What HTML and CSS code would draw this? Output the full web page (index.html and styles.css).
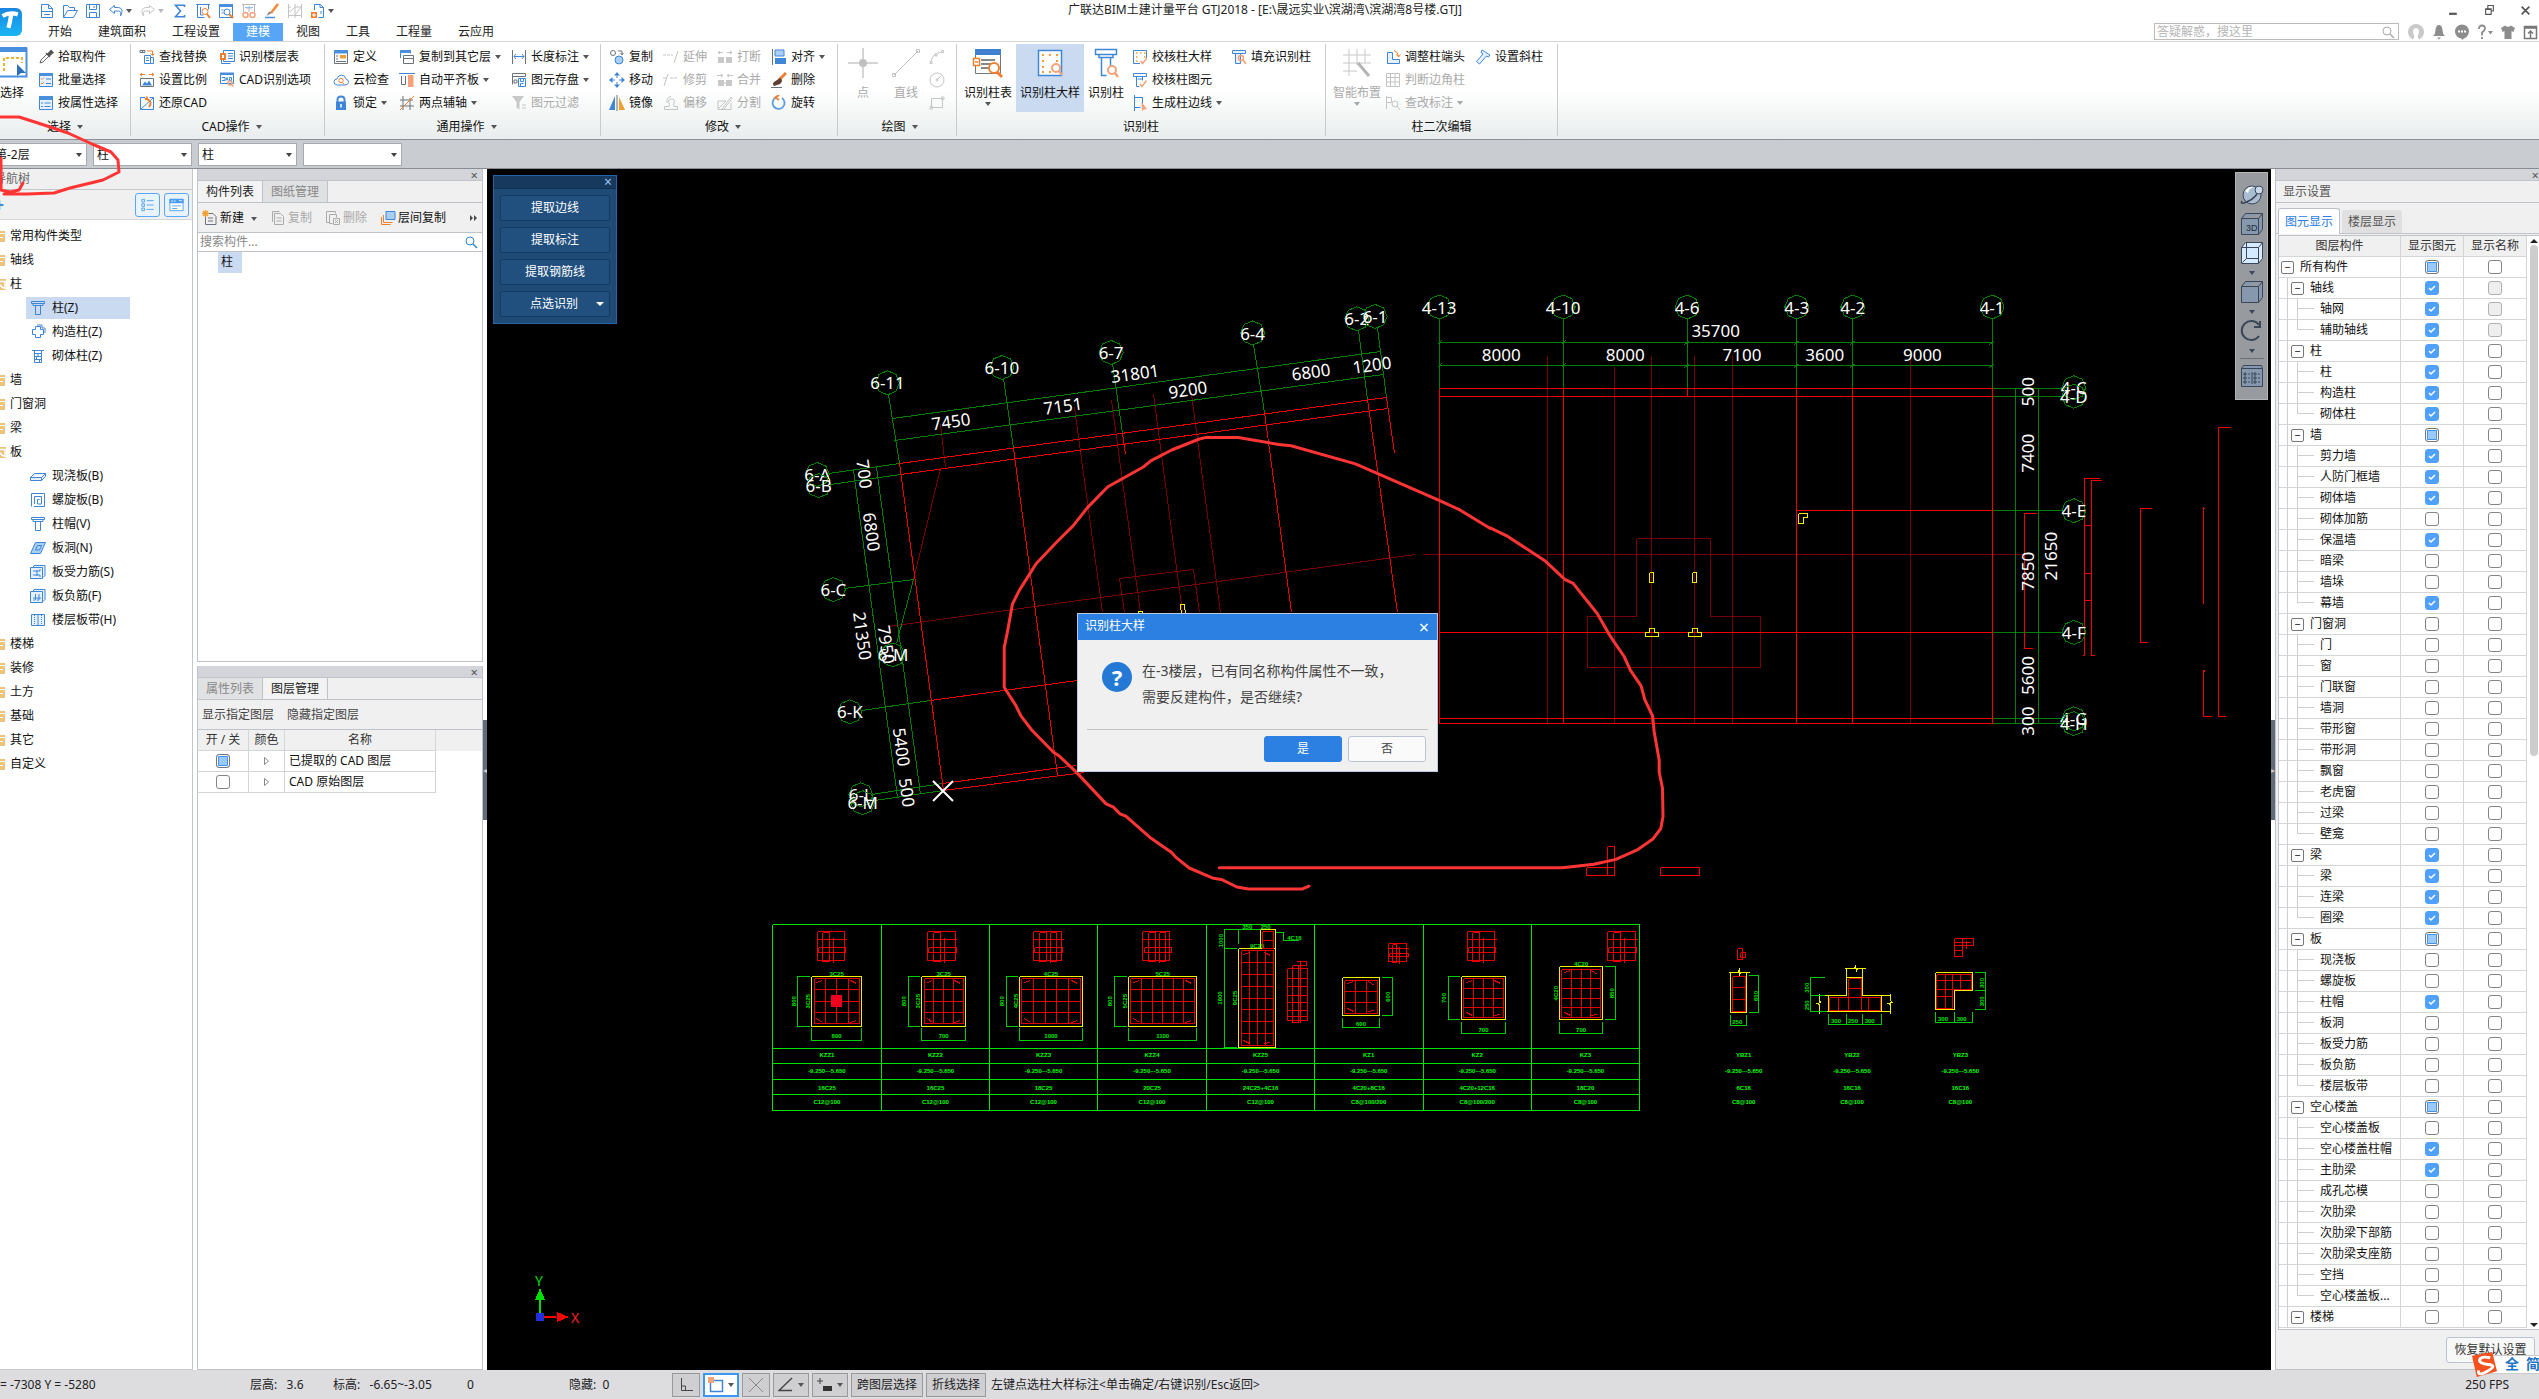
FILE: index.html
```
<!DOCTYPE html>
<html lang="zh-CN">
<head>
<meta charset="utf-8">
<title>广联达BIM土建计量平台 GTJ2018</title>
<link rel="stylesheet" href="styles.css">
</head>
<body>
<svg class="sprite" aria-hidden="true">
  <symbol id="i-new" viewBox="0 0 16 16"><path class="b" d="M2.5 1.5h7l4 4v9h-11zM9.500 1.500v4h4M2.500 8.500h11M5 11.500h6" /></symbol>
  <symbol id="i-open" viewBox="0 0 16 16"><path class="b" d="M1.500 14.500v-12h4l2 2h5v3M1.500 14.500l4-7h10l-4 7z"/></symbol>
  <symbol id="i-save" viewBox="0 0 16 16"><path class="b" d="M1.500 1.500h13v13h-13zM4.500 1.500v5h7v-5M4.500 14.500v-5h7v5M9 3v2"/></symbol>
  <symbol id="i-undo" viewBox="0 0 16 16"><path class="b" d="M6.500 2.500l-5 4 5 4v-2.500h4q3 0 2 5q4-7.500-2-8.500h-4z"/></symbol>
  <symbol id="i-redo" viewBox="0 0 16 16"><path class="g" d="M9.500 2.500l5 4-5 4v-2.500h-4q-3 0-2 5q-4-7.500 2-8.500h4z"/></symbol>
  <symbol id="i-sum" viewBox="0 0 16 16"><path d="M12.500 4v-1.800h-9l5 5.800-5 5.800h9V12" fill="none" stroke="#3f86d8" stroke-width="1.600"/></symbol>
  <symbol id="i-find" viewBox="0 0 16 16"><path class="b" d="M1 1.500h14M2.500 1.500v13h7M5.500 4v8h3M13.500 1.500v5"/><circle class="o" cx="10" cy="8.500" r="3"/><path class="o2" d="M12 11l3 4"/></symbol>
  <symbol id="i-winfind" viewBox="0 0 16 16"><path class="b" d="M1.500 1.500h13v13h-13zM3.500 7h2M3.500 10h2"/><path d="M1 1h14v3h-14z" fill="#4a8ede"/><circle cx="9" cy="9" r="3" fill="#fff" stroke="#3f86d8"/><path class="o2" d="M11 11l4 4"/></symbol>
  <symbol id="i-glasses" viewBox="0 0 16 16"><path d="M2.500 9v-7.500h11v7.500M1 1.500h14M5 5h6M8 3v6" fill="none" stroke="#b8b8b8"/><path d="M4 4.500h8" stroke="#8cc0f0"/><circle class="ol" cx="4.500" cy="12" r="2.500"/><circle class="ol" cx="11.500" cy="12" r="2.500"/></symbol>
  <symbol id="i-brush" viewBox="0 0 16 16"><path d="M14 1l-7 9" stroke="#f08a3c" stroke-width="2.600"/><path d="M7.500 10l-5 3q2-4 3-4.500" fill="#7a8088"/><path d="M1 14.500h10" stroke="#4a90e2" stroke-width="1.500"/></symbol>
  <symbol id="i-mesh" viewBox="0 0 16 16"><path class="g" d="M1.500 1v14M8 1v14M14.500 1v14M1 12.500h14M1 8h3l4-4h7M1 4h3M8 12l6-8"/></symbol>
  <symbol id="i-addpage" viewBox="0 0 16 16"><path class="b" d="M4.500 7v-5.500h6l3 3v10h-5M10 1.500v3h3.500M11 8v3"/><path d="M1 9h6v6h-6z" fill="#f08030"/><path d="M4 10v4M2 12h4" stroke="#fff"/></symbol>
  <symbol id="i-pick" viewBox="0 0 16 16"><path d="M2 14l1-3 6-6 2 2-6 6z" fill="#fff" stroke="#666"/><path d="M8 4l4 4M9.500 5.500l3.500-4 2 2-4 3.500z" stroke="#555" fill="#555" stroke-width="1.500"/></symbol>
  <symbol id="i-batch" viewBox="0 0 16 16"><path class="bf" d="M1.500 1.500h13v13h-13z"/><path d="M1 1h14v3h-14z" fill="#4a8ede"/><path class="o" d="M3 6.500l1 1 2-2M3 11l1 1 2-2"/><path class="b" d="M8 7h5M8 11.500h5"/></symbol>
  <symbol id="i-prop" viewBox="0 0 16 16"><path class="bf" d="M1.500 1.500h13v13h-13z"/><path d="M1 1h14v4h-14z" fill="#4a8ede"/><path class="b" d="M3 8h2M6.500 8h6M3 11.500h2M6.500 11.500h6"/></symbol>
  <symbol id="i-replace" viewBox="0 0 16 16"><path class="k" d="M1 1.500h5v2h-5zM3.500 1.500v2"/><path class="b" d="M5.500 6.500h6v8h-6zM7 9h3M7 11.500h3"/><path class="b" d="M11.500 8.500h3v6h-3"/><path class="o" d="M8 2h5.500v4M11.500 4.500l2 2 2-2"/></symbol>
  <symbol id="i-scale" viewBox="0 0 16 16"><path class="k" d="M1.500 6.500h13v8h-13z"/><path d="M3 13.500l3-4 2 2 2-3 3 5z" fill="#3f86d8"/><path class="o" d="M1 2.500h5M3 1L1 2.500 3 4M15 2.500h-5M13 1l2 1.500L13 4"/></symbol>
  <symbol id="i-restore" viewBox="0 0 16 16"><path class="b" d="M6 2.500h-4.500v12h13v-12h-4M1.500 14.500l13-12"/><path class="o2" d="M10 12q4-5-2-8M6 4.500l2-1-.5-2"/></symbol>
  <symbol id="i-floors" viewBox="0 0 16 16"><path class="b" d="M4.500 1.500h11v11h-11zM9 4.500h5M9 7h5M9 9.500h5"/><path class="b" d="M2.500 4v10.500h9"/><path d="M1 4h6v7H1z" fill="#f08030"/><path d="M3 6h2v3H3z" fill="#fff"/></symbol>
  <symbol id="i-cad" viewBox="0 0 16 16"><path class="b" d="M1.500 2.500h13v9h-13zM3 5.500h3v3H3M7 8.500l1-3 1 3M10.500 5.500h2v3h-2z"/><path d="M1 1.500h14" stroke="#4a8ede" stroke-width="2"/><circle class="ol" cx="11" cy="11" r="2"/><path class="ol" d="M12.500 12.500l2 2"/></symbol>
  <symbol id="i-define" viewBox="0 0 16 16"><path class="k" d="M1.500 1.500h13v13h-13z"/><path d="M1 1h14v3.500H1z" fill="#4a8ede"/><path d="M7 6h6v3.500H7z" fill="#f0a030"/><path class="k" d="M3 7h2M3 10h2M3 12.500h10"/></symbol>
  <symbol id="i-cloud" viewBox="0 0 16 16"><path class="b" d="M4 13q-3.500-.5-3-3.500.5-2.500 3-2.500 1-4 4.500-4t4.500 4q3 1 2.500 3.500-.5 2.500-3.500 2.500z"/><circle class="o" cx="8" cy="8.500" r="2.200"/><path class="o" d="M9.500 10.500l2 2"/></symbol>
  <symbol id="i-lock" viewBox="0 0 16 16"><path d="M4.500 7v-2.500q0-3 3.500-3t3.500 3v2.500" fill="none" stroke="#3f86d8" stroke-width="1.800"/><path d="M3 6.500h10v8.500h-10z" fill="#3f86d8"/><path d="M8 9v3.500" stroke="#fff" stroke-width="1.500"/></symbol>
  <symbol id="i-copyto" viewBox="0 0 16 16"><path class="b" d="M1.500 9v-7.500h10v3"/><path d="M1 1h11v3H1z" fill="#4a8ede"/><path class="k" d="M4.500 6.500h10v8h-10zM4.500 9.500h10"/></symbol>
  <symbol id="i-flush" viewBox="0 0 16 16"><path class="b" d="M0 1.500h16"/><path class="k" d="M2.500 4v8.500h4v-8.500"/><path d="M9 3h5.500v12H9z" fill="#f5a27a"/></symbol>
  <symbol id="i-axis" viewBox="0 0 16 16"><path class="k" d="M4 1v14M11 3v12M1 5h13M1 11h14"/><path class="o" d="M1 15L15 1"/></symbol>
  <symbol id="i-length" viewBox="0 0 16 16"><path class="k" d="M1.500 1v14M14.500 1v14"/><path class="b" d="M3 7.500h10M5 5L3 7.500 5 10M11 5l2 2.500-2 2.500"/></symbol>
  <symbol id="i-disk" viewBox="0 0 16 16"><path class="k" d="M1.500 12.500v-11h13v3M1.500 4.500h13M3 8h3v3H3z"/><path class="b" d="M7.500 6.500h7v8h-7zM9.500 6.500v3h3v-3M9.500 14v-2.500h3"/></symbol>
  <symbol id="i-filter" viewBox="0 0 16 16"><path d="M1 1h12l-4.500 6v7.500l-3-2V7z" fill="#c8c8c8"/><path class="g" d="M11 10h4M11 13h4"/></symbol>
  <symbol id="i-copy" viewBox="0 0 16 16"><circle class="k" cx="4" cy="4" r="2.500"/><circle cx="10" cy="11" r="4" fill="#a9cff5" stroke="#3f86d8"/><path class="k" d="M9 2h4v3M11.500 4l1.500 2 1.500-2"/></symbol>
  <symbol id="i-move" viewBox="0 0 16 16"><path d="M8 0l3 3.500H5zM8 16l3-3.500H5zM0 8l3.500-3v6zM16 8l-3.500-3v6z" fill="#3f86d8"/><path class="b" d="M8 3v3M8 10v3M3 8h3M10 8h3"/></symbol>
  <symbol id="i-mirror" viewBox="0 0 16 16"><path d="M6 1v14H0z" fill="#3f86d8"/><path d="M10 2v13h6z" fill="#f0a030"/><path class="k" d="M8 0v16"/></symbol>
  <symbol id="i-extend" viewBox="0 0 16 16"><path class="g" d="M0 6h3M4 6h3M8 6h2M15 2l-4 12"/></symbol>
  <symbol id="i-trim" viewBox="0 0 16 16"><path class="g" d="M5 2L1 14M0 6h4M7 6h3M11 6h3"/></symbol>
  <symbol id="i-offset" viewBox="0 0 16 16"><path class="g" d="M1.500 14.500h13v-3H11q-1-2 0-3.500 1.500-4-2.500-4T6 8q1 1.500 0 3.500H1.500zM4 8q-1-6 4-6.500"/></symbol>
  <symbol id="i-break" viewBox="0 0 16 16"><path d="M1 8h6v6H1zM9 8h6v6H9z" fill="#c8c8c8"/><path class="g" d="M1 3.500h5M3 2L1 3.500 3 5M15 3.500h-5M13 2l2 1.500L13 5"/></symbol>
  <symbol id="i-merge" viewBox="0 0 16 16"><path d="M1 8h6v6H1zM9 8h6v6H9z" fill="#c8c8c8"/><path class="g" d="M0 3.500h6M4 2l2 1.500L4 5M16 3.500h-6M12 2l-2 1.500L12 5M7 11h2"/></symbol>
  <symbol id="i-split" viewBox="0 0 16 16"><path class="g" d="M1 6h8M1 6v8.500h13V8M5 14l9-12 1 1.500L7 14M1 14L9 6"/></symbol>
  <symbol id="i-align" viewBox="0 0 16 16"><path d="M4 1h9v6H4z" fill="#a9cff5" stroke="#3f86d8"/><path d="M4 9h11v6H4z" fill="#3f86d8"/><path class="k" d="M1.500 0v16"/></symbol>
  <symbol id="i-erase" viewBox="0 0 16 16"><path d="M15 1L8 8" stroke="#f08030" stroke-width="3"/><path d="M9 6q4 2 0 6l-6 2q-2-2 0-4z" fill="#5d4034"/><path class="k" d="M0 15.500h11"/></symbol>
  <symbol id="i-rotate" viewBox="0 0 16 16"><path d="M5 2.500A6 6 0 1 0 11 3" fill="none" stroke="#5a9be6" stroke-width="1.800"/><path class="o2" d="M8 0l-3.500 2.500L8 5"/></symbol>
  <symbol id="i-circle" viewBox="0 0 16 16"><circle class="g" cx="8" cy="8" r="7"/><circle class="g" cx="8" cy="8" r="1"/><path class="g" d="M8 8l4-4"/></symbol>
  <symbol id="i-arc" viewBox="0 0 16 16"><path class="g" d="M2 13Q3 4 13 3M1 12.500h2v2H1zM12.500 1.500h2v2h-2zM6 5h2v2H6z"/></symbol>
  <symbol id="i-rect" viewBox="0 0 16 16"><path class="g" d="M2.500 3.500h11v9h-11zM1 11.500h2.500v2.500H1zM12.500 2h2.500v2.500h-2.500z"/></symbol>
  <symbol id="i-chkdet" viewBox="0 0 16 16"><path class="b" d="M1.500 1.500h13v13h-13z"/><path class="oy" d="M4 4h1.500M8 4h1.500M12 4h1.500M4 8h1.500M4 12h1.500M12 8h1.500"/><path d="M8 9h8v7H8z" fill="#fff"/><path class="ol" d="M8.500 12l2 2.500 4-5"/></symbol>
  <symbol id="i-chkcol" viewBox="0 0 16 16"><path class="b" d="M1.500 1.500h13v3h-13zM4.500 4.500v10h3M10.500 4.500v4M5.500 7h5"/><path class="ol" d="M8 12l2 2.500 4.500-6"/></symbol>
  <symbol id="i-edge" viewBox="0 0 16 16"><path class="b" d="M2.500 0v16M2.500 2.500h8v8M2.500 12.500h6"/><path d="M9.500 7l5.500 7-3 .5-2 1.500z" fill="#f5a27a"/></symbol>
  <symbol id="i-col" viewBox="0 0 16 16"><path class="b" d="M1.500 1.500h13v2h-13zM3 3.500v2h10v-2M5.500 5.500v9h5v-9"/></symbol>
  <symbol id="i-colfill" viewBox="0 0 16 16"><path class="bf" d="M1.500 1.500h13v3h-13zM4.500 4.500v10h5v-10"/><circle class="ol" cx="10" cy="9" r="2.500"/><path class="ol" d="M12 11l3 4"/></symbol>
  <symbol id="i-head" viewBox="0 0 16 16"><path class="bf" d="M2.500 3.500v11h12v-4h-7v-7z"/><path class="o" d="M9 1.500q4 1 4.500 6M11.500 5.500l2 2.500 2-2.500"/></symbol>
  <symbol id="i-corner" viewBox="0 0 16 16"><path class="g" d="M1.500 1.500h13v13h-13zM5.500 1.500v13M10 1.500v13M1.500 5.500h13M1.500 10h13"/></symbol>
  <symbol id="i-note" viewBox="0 0 16 16"><path class="g" d="M1.500 1v13M1.500 2.500h5v5h-5"/><circle class="g" cx="10" cy="9" r="3"/><path class="g" d="M12 11l3 4"/></symbol>
  <symbol id="i-slant" viewBox="0 0 16 16"><path class="bf" d="M7 1l8 5-1.500 2-2-1-7 8-3-2.500 6.500-7.500-2-1.500z"/></symbol>
  <symbol id="i-magn" viewBox="0 0 16 16"><circle cx="7" cy="7" r="4" fill="none" stroke="currentColor"/><path d="M10 10l4 4" stroke="currentColor" stroke-width="1.500"/></symbol>
  <symbol id="i-struct" viewBox="0 0 16 16"><path class="b" d="M5.500 2.500h5v3h3v5h-3v3h-5v-3h-3v-5h3zM7 1h5v3h3v5"/></symbol>
  <symbol id="i-brick" viewBox="0 0 16 16"><path class="b" d="M2 2.500h12M4.500 2.500v12h7v-12M4.500 5.500h7M4.500 8.500h7M4.500 11.500h7M8 5v3M6.500 9v2M9.500 12v2"/></symbol>
  <symbol id="i-slab" viewBox="0 0 16 16"><path class="bf" d="M.5 9.500l4-4h11v3l-4 4h-11zM.5 9.500h11l4-4M11.500 9.500v3"/></symbol>
  <symbol id="i-spiral" viewBox="0 0 16 16"><path class="b" d="M4 14.500h10.500v-13h-13v13M4.500 12V4.500h7v7.500h-4V7.500h2"/></symbol>
  <symbol id="i-hole" viewBox="0 0 16 16"><path d="M.5 13.500l5-11h10l-5 11zM5.500 10l2-4.500h4l-2 4.500z" fill="#a9cff5" stroke="#3f86d8"/></symbol>
  <symbol id="i-rebar" viewBox="0 0 16 16"><path class="bf" d="M.5 3.500h12v11H.5zM3 3.500l1-2h11v10l-2 2"/><path class="b" d="M3 7h7v-2M3 11h7v2M7 6v6"/></symbol>
  <symbol id="i-neg" viewBox="0 0 16 16"><path class="bf" d="M.5 3.500h12v11H.5zM3 3.500l1-2h11v10l-2 2"/><path class="b" d="M3 10h8M5.500 6v6h-2M9 6v6h-2"/></symbol>
  <symbol id="i-band" viewBox="0 0 16 16"><path class="bf" d="M1.500 2.500h13v11h-13zM8 2v12"/><path d="M4.500 3v11M11.500 3v11" stroke="#3f86d8" stroke-dasharray="1 1"/></symbol>
  <symbol id="i-newitem" viewBox="0 0 16 16"><path class="k" d="M5 3.500h6l3 3v8H3.500V7M6 8h5M6 11h5"/><path class="oy" d="M0 3.500h7M3.500 0v7M1 1l5 5M6 1L1 6"/></symbol>
  <symbol id="i-pages" viewBox="0 0 16 16"><path class="gd" d="M4.500 3.500h6l3 3v8h-9zM2.500 12V1.500h7M6.500 8h5M6.500 11h5"/></symbol>
  <symbol id="i-delpage" viewBox="0 0 16 16"><path class="gd" d="M4 12.500H1.500v-11h9v2M4.500 4.500h7v3M4.500 4.500v9h3M8.500 8.500h6v6h-6zM10 10l3 3M13 10l-3 3"/></symbol>
  <symbol id="i-layers" viewBox="0 0 16 16"><path class="o" d="M1.500 7v7.500h9M3.500 5v7.500h9"/><path d="M6 1.500h9v8H6z" fill="#a9cff5" stroke="#3f86d8"/></symbol>
  <symbol id="i-folder" viewBox="0 0 16 16"><path d="M1 3h13v11H1z" fill="#ecc27c"/><path d="M1 5.500h13M8 9.500h4" stroke="#fff"/></symbol>
  <symbol id="i-folder-open" viewBox="0 0 16 16"><path d="M1 3h14v11H1z" fill="#ecc27c"/><path d="M1 5.500h13v7q-4-1-5-4" fill="none" stroke="#fff" stroke-width="1.500"/></symbol>
  <symbol id="i-cube" viewBox="0 0 24 24"><path d="M1.500 6.500l4-5h17v16l-4 5h-17zM1.500 6.500h17l4-5M18.500 6.500v16" stroke="#3b4656" fill="#8598ae"/></symbol>
</svg>

<header class="top">
  <div class="logo"><svg viewBox="0 0 26 32"><path d="M3 9q8-5 18-2M13 8q-1 8-3 15" fill="none" stroke="#fff" stroke-width="5"/></svg></div>
  <div class="top-main">
    <div class="qat">
      <button aria-label="新建"><svg><use href="#i-new"/></svg></button>
      <button aria-label="打开"><svg><use href="#i-open"/></svg></button>
      <button aria-label="保存"><svg><use href="#i-save"/></svg></button>
      <button class="drop" aria-label="撤销"><svg><use href="#i-undo"/></svg></button>
      <button class="drop off" aria-label="恢复"><svg><use href="#i-redo"/></svg></button>
      <button aria-label="汇总"><svg><use href="#i-sum"/></svg></button>
      <button aria-label="查找"><svg><use href="#i-find"/></svg></button>
      <button aria-label="查看"><svg><use href="#i-winfind"/></svg></button>
      <button aria-label="浏览"><svg><use href="#i-glasses"/></svg></button>
      <button aria-label="格式"><svg><use href="#i-brush"/></svg></button>
      <button aria-label="网格"><svg><use href="#i-mesh"/></svg></button>
      <button class="drop" aria-label="添加"><svg><use href="#i-addpage"/></svg></button>
    </div>
    <nav class="menu">
      <a href="#">开始</a><a href="#">建筑面积</a><a href="#">工程设置</a><a href="#" class="on">建模</a><a href="#">视图</a><a href="#">工具</a><a href="#">工程量</a><a href="#">云应用</a>
    </nav>
  </div>
  <h1>广联达BIM土建计量平台 GTJ2018 - [E:\晟远实业\滨湖湾\滨湖湾8号楼.GTJ]</h1>
  <div class="top-right">
    <div class="win"><button aria-label="最小化"><svg viewBox="0 0 10 10"><path d="M1 8h7" stroke="#555" stroke-width="2"/></svg></button><button aria-label="还原"><svg viewBox="0 0 10 10"><path d="M3.500 3V.5h5v5H7M1.500 3.500h5v5h-5zM1 4h6" fill="none" stroke="#555"/></svg></button><button aria-label="关闭"><svg viewBox="0 0 10 10"><path d="M1.500 1.500l7 7M8.500 1.500l-7 7" stroke="#555" stroke-width="1.500"/></svg></button></div>
    <div class="help">
      <label class="ask"><input type="text" placeholder="答疑解惑，搜这里" aria-label="搜索帮助"><svg><use href="#i-magn"/></svg></label>
      <button aria-label="用户"><svg viewBox="0 0 16 16"><circle cx="8" cy="8" r="8" fill="#c9c9c9"/><path d="M4 16q3-2 2-5-2-4 0-6t4 0 0 6q-1 3 2 5z" fill="#fff"/></svg></button>
      <button aria-label="通知"><svg viewBox="0 0 16 16"><path d="M2 12q2.500-2 2.500-6Q5 1 8 1t3.500 5q0 4 2.500 6zM6 13.500h4L8 15.500z" fill="#8d8d8d"/></svg></button>
      <button aria-label="消息"><svg viewBox="0 0 16 16"><circle cx="8" cy="7.500" r="7" fill="#8d8d8d"/><path d="M7 13h5l-4 3z" fill="#8d8d8d"/><path d="M4 7.500h2M7 7.500h2M10 7.500h2" stroke="#fff" stroke-width="2"/></svg></button>
      <button aria-label="帮助"><svg viewBox="0 0 16 16"><path d="M2 5q0-3.500 3-3.500t3 3Q8 6.500 5 8.500v3M5 13v2" fill="none" stroke="#8d8d8d" stroke-width="1.800"/><path d="M11 7h5l-2.500 3.500z" fill="#8d8d8d"/></svg></button>
      <button aria-label="皮肤"><svg viewBox="0 0 16 16"><path d="M1 4l4-2.500q3 2.500 6 0L15 4l-1.500 4-2-1v8h-7V7l-2 1z" fill="#8d8d8d"/></svg></button>
      <button aria-label="收起"><svg viewBox="0 0 16 16"><path d="M1.500 2.500h12v12h-12zM1.500 4h12M7.500 14V7M5 9.500L7.500 7l2.500 2.500" fill="none" stroke="#777" stroke-width="1.500"/></svg></button>
    </div>
  </div>
</header>

<section class="ribbon">
  <div class="group g-select">
    <div class="tools">
      <button class="big cut"><svg viewBox="0 0 32 32"><path d="M0 1.500h30.500v28H0" fill="#fff" stroke="#4a90e2" stroke-width="2"/><path d="M0 0h31v5H0z" fill="#4a8ede"/><path d="M8 24V11h18v5" fill="none" stroke="#f0b030" stroke-width="2" stroke-dasharray="3 2"/><path d="M21 17l9 9h-5l-4 3z" fill="#2f6dbd"/></svg>选择</button>
      <div class="col"><button><svg><use href="#i-pick"/></svg>拾取构件</button><button><svg><use href="#i-batch"/></svg>批量选择</button><button><svg><use href="#i-prop"/></svg>按属性选择</button></div>
    </div>
    <div class="cap more">选择</div>
  </div>
  <div class="group g-cad">
    <div class="tools">
      <div class="col"><button><svg><use href="#i-replace"/></svg>查找替换</button><button><svg><use href="#i-scale"/></svg>设置比例</button><button><svg><use href="#i-restore"/></svg>还原CAD</button></div>
      <div class="col"><button><svg><use href="#i-floors"/></svg>识别楼层表</button><button><svg><use href="#i-cad"/></svg>CAD识别选项</button></div>
    </div>
    <div class="cap more">CAD操作</div>
  </div>
  <div class="group g-common">
    <div class="tools">
      <div class="col"><button><svg><use href="#i-define"/></svg>定义</button><button><svg><use href="#i-cloud"/></svg>云检查</button><button class="more"><svg><use href="#i-lock"/></svg>锁定</button></div>
      <div class="col"><button class="more"><svg><use href="#i-copyto"/></svg>复制到其它层</button><button class="more"><svg><use href="#i-flush"/></svg>自动平齐板</button><button class="more"><svg><use href="#i-axis"/></svg>两点辅轴</button></div>
      <div class="col"><button class="more"><svg><use href="#i-length"/></svg>长度标注</button><button class="more"><svg><use href="#i-disk"/></svg>图元存盘</button><button disabled><svg><use href="#i-filter"/></svg>图元过滤</button></div>
    </div>
    <div class="cap more">通用操作</div>
  </div>
  <div class="group g-edit">
    <div class="tools">
      <div class="col"><button><svg><use href="#i-copy"/></svg>复制</button><button><svg><use href="#i-move"/></svg>移动</button><button><svg><use href="#i-mirror"/></svg>镜像</button></div>
      <div class="col"><button disabled><svg><use href="#i-extend"/></svg>延伸</button><button disabled><svg><use href="#i-trim"/></svg>修剪</button><button disabled><svg><use href="#i-offset"/></svg>偏移</button></div>
      <div class="col"><button disabled><svg><use href="#i-break"/></svg>打断</button><button disabled><svg><use href="#i-merge"/></svg>合并</button><button disabled><svg><use href="#i-split"/></svg>分割</button></div>
      <div class="col"><button class="more"><svg><use href="#i-align"/></svg>对齐</button><button><svg><use href="#i-erase"/></svg>删除</button><button><svg><use href="#i-rotate"/></svg>旋转</button></div>
    </div>
    <div class="cap more">修改</div>
  </div>
  <div class="group g-draw">
    <div class="tools">
      <button class="big" disabled><svg viewBox="0 0 32 32"><path d="M16 1v30M1 16h30" stroke="#c8c8c8" stroke-width="1.500"/><circle cx="16" cy="16" r="4" fill="#c0c0c0"/></svg>点</button>
      <button class="big" disabled><svg viewBox="0 0 32 32"><path d="M4 28L28 4M2.500 26.500h3v3h-3zM26.500 2.500h3v3h-3z" stroke="#c0c0c0" fill="#fff"/></svg>直线</button>
      <div class="col"><button disabled aria-label="弧"><svg><use href="#i-arc"/></svg></button><button disabled aria-label="圆"><svg><use href="#i-circle"/></svg></button><button disabled aria-label="矩形"><svg><use href="#i-rect"/></svg></button></div>
    </div>
    <div class="cap more">绘图</div>
  </div>
  <div class="group g-ident">
    <div class="tools">
      <button class="big down"><svg viewBox="0 0 32 32"><path d="M3.500 3.500h25v23h-25z" fill="#fff" stroke="#777"/><path d="M3 2h26v6H3z" fill="#3f7fd0"/><path d="M9 13h14M9 17h10M9 21h8" stroke="#888" stroke-width="2"/><path d="M1.500 11.500h6v7h-6zM3 15h3" fill="#fff" stroke="#f08030" stroke-width="1.500"/><circle cx="22" cy="21" r="5" fill="#fff" stroke="#f08030" stroke-width="2"/><path d="M25 25l5 5" stroke="#f08030" stroke-width="3"/></svg>识别柱表</button>
      <button class="big on"><svg viewBox="0 0 32 32"><path d="M4.500 3.500h23v25h-23z" fill="#fff" stroke="#3f86d8" stroke-width="1.500"/><path d="M8 8h2M15 8h2M22 8h2M8 14h2M8 20h2M8 25h2M15 25h2M22 14h2" stroke="#f0a030" stroke-width="2"/><circle cx="22" cy="21" r="4" fill="#fff" stroke="#f5a27a" stroke-width="2"/><path d="M25 24l3 4" stroke="#f5a27a" stroke-width="2.500"/></svg>识别柱大样</button>
      <button class="big"><svg viewBox="0 0 32 32"><path d="M5.500 2.500h21v5h-21zM9 7.500v3h14v-3M11.500 10.500v18h5M20.500 10.500v9" fill="#fff" stroke="#3f86d8" stroke-width="1.500"/><circle cx="22" cy="23" r="4" fill="#fff" stroke="#f5a27a" stroke-width="2"/><path d="M25 26l3 4" stroke="#f5a27a" stroke-width="2.500"/></svg>识别柱</button>
      <div class="col"><button><svg><use href="#i-chkdet"/></svg>校核柱大样</button><button><svg><use href="#i-chkcol"/></svg>校核柱图元</button><button class="more"><svg><use href="#i-edge"/></svg>生成柱边线</button></div>
      <div class="col"><button><svg><use href="#i-colfill"/></svg>填充识别柱</button></div>
    </div>
    <div class="cap">识别柱</div>
  </div>
  <div class="group g-second">
    <div class="tools">
      <button class="big down" disabled><svg viewBox="0 0 32 32"><path d="M8 2v27M16 2v16M24 2v14M2 8h28M2 16h28M2 24h14" stroke="#c8c8c8"/><path d="M17 16l11 13" stroke="#b5b5b5" stroke-width="3"/></svg>智能布置</button>
      <div class="col"><button><svg><use href="#i-head"/></svg>调整柱端头</button><button disabled><svg><use href="#i-corner"/></svg>判断边角柱</button><button class="more" disabled><svg><use href="#i-note"/></svg>查改标注</button></div>
      <div class="col"><button><svg><use href="#i-slant"/></svg>设置斜柱</button></div>
    </div>
    <div class="cap">柱二次编辑</div>
  </div>
</section>

<section class="combos">
  <label class="first"><select aria-label="楼层"><option>第-2层</option></select></label>
  <label><select aria-label="类型"><option>柱</option></select></label>
  <label><select aria-label="构件类型"><option>柱</option></select></label>
  <label><select aria-label="构件"><option></option></select></label>
</section>

<main>
  <aside class="nav">
    <h2>导航树</h2>
    <div class="nav-bar"><i>✚</i>
      <button aria-label="列表"><svg viewBox="0 0 16 16"><path d="M1.500 1.500h3v3h-3zM1.500 6.500h3v3h-3zM1.500 11.500h3v3h-3zM7 3h8M7 8h8M7 13h8" fill="none" stroke="#4a9cf0"/></svg></button>
      <button aria-label="面板"><svg viewBox="0 0 16 16"><path d="M.5 1.500h15v13H.5z" fill="#fff" stroke="#4a9cf0"/><path d="M0 1h16v5H0z" fill="#4a9cf0"/><path d="M2 3.500h2M5 3.500h2M11 3h3" stroke="#fff"/><path d="M3 9h10M3 12h6" stroke="#4a9cf0"/></svg></button>
    </div>
    <ul class="tree">
      <li><svg><use href="#i-folder"/></svg>常用构件类型</li>
      <li><svg><use href="#i-folder"/></svg>轴线</li>
      <li><svg><use href="#i-folder-open"/></svg>柱</li>
      <li class="sub on"><svg><use href="#i-col"/></svg>柱(Z)</li>
      <li class="sub"><svg><use href="#i-struct"/></svg>构造柱(Z)</li>
      <li class="sub"><svg><use href="#i-brick"/></svg>砌体柱(Z)</li>
      <li><svg><use href="#i-folder"/></svg>墙</li>
      <li><svg><use href="#i-folder"/></svg>门窗洞</li>
      <li><svg><use href="#i-folder"/></svg>梁</li>
      <li><svg><use href="#i-folder-open"/></svg>板</li>
      <li class="sub"><svg><use href="#i-slab"/></svg>现浇板(B)</li>
      <li class="sub"><svg><use href="#i-spiral"/></svg>螺旋板(B)</li>
      <li class="sub"><svg><use href="#i-col"/></svg>柱帽(V)</li>
      <li class="sub"><svg><use href="#i-hole"/></svg>板洞(N)</li>
      <li class="sub"><svg><use href="#i-rebar"/></svg>板受力筋(S)</li>
      <li class="sub"><svg><use href="#i-neg"/></svg>板负筋(F)</li>
      <li class="sub"><svg><use href="#i-band"/></svg>楼层板带(H)</li>
      <li><svg><use href="#i-folder"/></svg>楼梯</li>
      <li><svg><use href="#i-folder"/></svg>装修</li>
      <li><svg><use href="#i-folder"/></svg>土方</li>
      <li><svg><use href="#i-folder"/></svg>基础</li>
      <li><svg><use href="#i-folder"/></svg>其它</li>
      <li><svg><use href="#i-folder"/></svg>自定义</li>
    </ul>
  </aside>

  <div class="middle">
    <section class="panel list">
      <div class="strip"><button aria-label="关闭">×</button></div>
      <div class="tabs"><button class="on">构件列表</button><button>图纸管理</button></div>
      <div class="bar">
        <button class="more"><svg><use href="#i-newitem"/></svg>新建</button>
        <button disabled><svg><use href="#i-pages"/></svg>复制</button>
        <button disabled><svg><use href="#i-delpage"/></svg>删除</button>
        <button><svg><use href="#i-layers"/></svg>层间复制</button>
        <button class="over" aria-label="更多"><svg viewBox="0 0 8 6"><path d="M0 0l3 3-3 3zM4 0l3 3-3 3z" fill="#444"/></svg></button>
      </div>
      <label class="search"><input type="text" placeholder="搜索构件..." aria-label="搜索构件"><svg><use href="#i-magn"/></svg></label>
      <ul class="items"><li>柱</li></ul>
    </section>
    <section class="panel layers">
      <div class="strip"><button aria-label="关闭">×</button></div>
      <div class="tabs"><button>属性列表</button><button class="on">图层管理</button></div>
      <div class="bar acts"><button>显示指定图层</button><button>隐藏指定图层</button></div>
      <div class="sheet">
      <table class="grid">
        <thead><tr><th class="c-on">开 / 关</th><th class="c-color">颜色</th><th class="c-name">名称</th></tr></thead>
        <tbody>
          <tr><td><input type="checkbox" data-mixed aria-label="已提取的 CAD 图层"></td><td><svg class="tri" viewBox="0 0 6 8"><path d="M.5 .5l4 3.500-4 3.500z"/></svg></td><td class="l">已提取的 CAD 图层</td></tr>
          <tr><td><input type="checkbox" aria-label="CAD 原始图层"></td><td><svg class="tri" viewBox="0 0 6 8"><path d="M.5 .5l4 3.500-4 3.500z"/></svg></td><td class="l">CAD 原始图层</td></tr>
        </tbody>
      </table>
      </div>
    </section>
  </div>
  <div class="split"><i>◂</i></div>

  <div class="canvas">
    <svg id="cad" class="cad" viewBox="487 169 1784 1201" role="img" aria-label="CAD 图纸"></svg>
    <div class="palette">
      <div class="palette-head"><button aria-label="关闭">×</button></div>
      <button>提取边线</button><button>提取标注</button><button>提取钢筋线</button><button class="menu-btn">点选识别</button>
    </div>
    <div class="dialog" role="dialog" aria-label="识别柱大样">
      <header>识别柱大样<button aria-label="关闭">×</button></header>
      <div class="msg"><span class="q">?</span><p>在-3楼层，已有同名称构件属性不一致，<br>需要反建构件，是否继续?</p></div>
      <footer><button class="yes">是</button><button>否</button></footer>
    </div>
    <div class="views">
      <button aria-label="动态观察"><svg viewBox="0 0 24 24"><circle cx="12" cy="12" r="9" fill="#a9bdd3" stroke="#3b4656"/><path d="M5 8q4-5 9-4-5 1-6 6z" fill="#fff"/><circle cx="19" cy="7" r="4" fill="#c9d9ea" stroke="#3b4656"/><path d="M2 18q-2 3 2 2 9-3 13-9" fill="none" stroke="#3b4656" stroke-width="1.500"/></svg></button>
      <button aria-label="三维"><svg viewBox="0 0 24 24"><use href="#i-cube"/><text x="6" y="19">3D</text></svg></button>
      <button aria-label="俯视" class="down"><svg viewBox="0 0 24 24"><path d="M1.500 6.500l4-5h17v16l-4 5h-17z" fill="#d5eaff" stroke="#3b4656"/><path d="M1.500 6.500h17l4-5M18.500 6.500v16M6.500 1.500v16h12M6.500 17.500l-4 4" stroke="#3b4656" fill="none"/></svg></button>
      <button aria-label="实体" class="down"><svg viewBox="0 0 24 24"><use href="#i-cube"/></svg></button>
      <button aria-label="旋转" class="down"><svg viewBox="0 0 24 24"><path d="M19 6a9.500 9.500 0 1 0 0 11M20 2v6h-6" fill="none" stroke="#3b4656" stroke-width="2"/></svg></button>
      <hr>
      <button aria-label="显示设置"><svg viewBox="0 0 24 24"><path d="M1.500 4.500l2-3h18l1 3v18h-21zM1.500 4.500h21M12 8v12M4 9h2v2H4zM4 13h2v2H4zM4 17h2v2H4zM8 10h2M8 14h2M8 18h2M14 9h2v2h-2zM14 13h2v2h-2zM14 17h2v2h-2zM18 10h2M18 14h2M18 18h2" fill="#8598ae" stroke="#3b4656"/></svg></button>
    </div>
  </div>
  <div class="split"><i>▸</i></div>

  <aside class="panel show">
    <div class="strip"><button aria-label="关闭">×</button></div>
    <h2>显示设置</h2>
    <div class="subtabs"><button class="on">图元显示</button><button>楼层显示</button></div>
    <div class="scroll">
      <div class="view">
      <table class="grid tree-grid">
        <thead><tr><th class="c-tree">图层构件</th><th class="c-flag">显示图元</th><th class="c-flag">显示名称</th></tr></thead>
        <tbody id="rows"></tbody>
      </table>
      </div>
      <div class="rail"><i class="up"></i><b></b><i class="dn"></i></div>
    </div>
    <div class="reset"><button>恢复默认设置</button></div>
  </aside>
</main>

<footer class="status">
  <span class="s-pos">= -7308 Y = -5280</span>
  <span class="s-h">层高:&nbsp;&nbsp; 3.6</span>
  <span class="s-e">标高:&nbsp;&nbsp; -6.65~-3.05</span>
  <span class="s-n">0</span>
  <span class="s-hide">隐藏:&nbsp; 0</span>
  <button aria-label="正交"><svg viewBox="0 0 16 16"><path d="M3.500 1v12.500H15M3.500 9h4v4" fill="none" stroke="#444"/></svg></button>
  <button class="on more" aria-label="框选"><svg viewBox="0 0 16 16"><path d="M2.500 3.500h12v11h-12z" fill="#fff" stroke="#3f86d8" stroke-width="1.500"/><path d="M0 0h6v6H0z" fill="#f5a27a"/></svg></button>
  <button aria-label="交点"><svg viewBox="0 0 16 16"><path d="M1 1l14 14M15 1L1 15" stroke="#888"/></svg></button>
  <button class="more" aria-label="角度"><svg viewBox="0 0 16 16"><path d="M14 1L1 13.500h13" fill="none" stroke="#444" stroke-width="1.500"/></svg></button>
  <button class="more" aria-label="点加"><svg viewBox="0 0 16 16"><path d="M0 4h6M3 1v6" stroke="#444"/><path d="M6 9h9v5H6z" fill="#333"/></svg></button>
  <button>跨图层选择</button>
  <button>折线选择</button>
  <span class="hint">左键点选柱大样标注&lt;单击确定/右键识别/Esc返回&gt;</span>
  <span class="fps">250 FPS</span>
</footer>

<div class="ime"><svg viewBox="0 0 28 28"><path d="M1 5l21-4 5 20-21 6z" fill="#f4511e"/><path d="M20 7q-10-2-11 2t9 5-1 7-9-1" fill="none" stroke="#fff" stroke-width="3"/></svg><b>全</b><b>简</b></div>
<svg class="mark" viewBox="0 0 130 90" aria-hidden="true"><path d="M0 7h19l19 6 30 10 24 11 19 8 7 8 1 12-16 8-33 8-16 5-27 1H4M1 48v32l9 2 9-2 4-7"/></svg>
<script src="app.js"></script>
</body>
</html>
```
FILE: styles.css
```
* { box-sizing: border-box; }
html, body { height: 100%; margin: 0; }
body {
  display: flex; flex-direction: column; overflow: hidden; position: relative;
  font: 12px/18px "Noto Sans", "Noto Sans CJK SC", sans-serif; color: #111; background: #fff;
}
button, input, select { font: inherit; color: inherit; margin: 0; }
button { border: 0; padding: 0; background: none; white-space: nowrap; }
h1, h2, p, ul { margin: 0; padding: 0; font-weight: 400; font-size: 12px; }
ul { list-style: none; }
i { font-style: normal; }
a { color: inherit; text-decoration: none; }
svg { display: block; flex: none; }
button svg, li svg, label svg { width: 16px; height: 16px; }
.sprite { position: absolute; width: 0; height: 0; }
.b { fill: none; stroke: #3f86d8; }
.bf { fill: #e6f1fd; stroke: #3f86d8; }
.k { fill: none; stroke: #6b727a; }
.g { fill: none; stroke: #c4c4c4; }
.gd { fill: none; stroke: #aaa; }
.o { fill: none; stroke: #f08030; }
.o2 { fill: none; stroke: #f08030; stroke-width: 2; }
.ol { fill: none; stroke: #f5a27a; stroke-width: 1.500; }
.oy { fill: none; stroke: #f0a030; stroke-width: 1.500; }

/* small drop-down triangle */
.more::after, .drop::after, .down::after {
  content: ""; border: 3px solid transparent; border-top: 4px solid #555; border-bottom: 0; flex: none;
}

/* title, quick access and menu */
.top { display: flex; height: 42px; border-bottom: 1px solid #d4d5d7; flex: none; }
.logo { width: 24px; padding-top: 8px; margin-right: 11px; }
.logo svg { width: 22px; height: 28px; background: linear-gradient(#1b86e0, #19b6f5); border-radius: 0 6px 6px 0; }
.top-main { display: flex; flex-direction: column; flex: 1; }
.qat { display: flex; height: 23px; padding: 2px 0 0 3px; align-items: flex-start; }
.qat button { display: flex; align-items: center; width: 23px; height: 17px; padding-left: 1px; }
.qat .drop { width: 32px; gap: 2px; }
.qat .off::after { opacity: .4; }
.menu { display: flex; }
.menu a { padding: 0 13px; height: 18px; line-height: 18px; color: #222; }
.menu .on { background: #57a5f7; color: #fff; }
.top h1 { line-height: 20px; color: #222; margin-right: 44px; }
.top-right { flex: 1; display: flex; flex-direction: column; align-items: flex-end; }
.win { display: flex; gap: 25px; height: 23px; padding: 5px 8px 0 0; align-items: flex-start; }
.win svg { width: 11px; height: 11px; }
.help { display: flex; align-items: center; gap: 7px; height: 17px; }
.ask { display: flex; align-items: center; width: 245px; height: 17px; border: 1px solid #bbb; padding-right: 2px; color: #aaa; margin-right: 2px; }
.ask input, .search input { flex: 1; min-width: 0; border: 0; outline: 0; background: none; padding: 0 2px; height: 15px; }
.ask input::placeholder { color: #b5b5b5; }

/* ribbon */
.ribbon { display: flex; height: 98px; flex: none; background: linear-gradient(#fff 50%, #e9eded); border-bottom: 1px solid #8b8f97; padding: 2px 0 3px; }
.group { display: flex; flex-direction: column; border-right: 1px solid #c9cccf; padding-left: 8px; flex: none; }
.group:first-child { padding-left: 0; }
.tools { display: flex; gap: 10px; height: 72px; align-items: flex-start; }
.col { display: flex; flex-direction: column; padding-top: 1px; }
.col button { display: flex; align-items: center; gap: 4px; height: 23px; }
button:disabled { color: #aaa; }
button:disabled::after { opacity: .5; }
.cap { display: flex; justify-content: center; align-items: center; gap: 6px; line-height: 18px; padding-top: 2px; }
.g-ident .cap, .g-second .cap { padding-top: 4px; }
.big { display: flex; flex-direction: column; align-items: center; height: 68px; padding: 2px 4px 0; }
.big svg { width: 32px; height: 32px; margin: 1px 0 5px; }
.big.on { background: #c9daf1; }
.big.cut { padding: 2px 0 0; width: 28px; overflow: hidden; align-items: flex-start; }
.big.cut svg { margin-left: -4px; }
.g-select { width: 131px; }
.g-cad { width: 194px; }
.g-cad .tools { gap: 12px; }
.g-common { width: 276px; }
.g-edit { width: 237px; }
.g-draw { width: 119px; padding-left: 5px; }
.g-draw .tools { gap: 3px; }
.g-ident { width: 369px; padding-left: 0; }
.g-ident .tools { gap: 0; padding-left: 3px; }
.g-ident .col { margin-left: 4px; }
.g-ident .col + .col { margin-left: 9px; }
.g-second { width: 232px; padding-left: 0; }
.g-second .tools { gap: 0; padding-left: 3px; }
.g-second .col + .col { margin-left: 10px; }

/* combo row */
.combos { display: flex; gap: 6px; height: 29px; flex: none; padding: 3px 0 0; background: #c9ccd1; border-bottom: 1px solid #888d95; overflow: hidden; }
.combos label { display: flex; align-items: center; width: 99px; height: 23px; background: #fff; border: 1px solid #a5a9b0; padding-right: 4px; }
.combos .first { width: 87px; border-left: 0; }
.combos .first select { margin-left: -8px; }
.combos label::after { content: ""; border: 3px solid transparent; border-top: 4px solid #444; border-bottom: 0; }
.combos select { appearance: none; flex: 1; min-width: 0; border: 0; background: none; padding: 0 3px; outline: 0; }

/* main area */
main { display: flex; flex: 1; min-height: 0; }
.nav { width: 193px; border-right: 1px solid #c4c7cc; border-bottom: 1px solid #c4c7cc; margin-right: 4px; flex: none; overflow: hidden; }
.nav h2 { height: 21px; line-height: 20px; background: #f0f0f0; border-bottom: 1px solid #c4c7cc; text-indent: -6px; color: #666; }
.nav-bar { display: flex; gap: 4px; align-items: center; height: 30px; background: #f0f0f0; border-bottom: 1px solid #d4d6da; padding-right: 3px; }
.nav-bar i { flex: 1; color: #3f86d8; margin-left: -6px; font-size: 10px; }
.nav-bar button { display: flex; align-items: center; justify-content: center; width: 25px; height: 24px; border: 1px solid #5aa7f5; border-radius: 3px; background: #e9f3fd; }
.nav-bar svg { width: 15px; height: 14px; }
.tree { display: flex; flex-direction: column; padding-top: 4px; }
.tree li { display: flex; align-items: center; height: 24px; margin-left: -9px; gap: 3px; }
.tree .sub { margin: 1px 0 1px 26px; padding: 0 4px; width: 104px; gap: 6px; height: 22px; }
.tree .on { background: #c9daf1; }

.middle { width: 286px; display: flex; flex-direction: column; gap: 4px; flex: none; }
.panel { display: flex; flex-direction: column; border: 1px solid #bfc2c8; border-top: 0; background: #fff; min-height: 0; }
.list { flex: 493; }
.layers { flex: 704; }
.strip { display: flex; justify-content: flex-end; height: 12px; background: #d3d5db; border-bottom: 1px solid #c0c3c9; padding-right: 4px; flex: none; }
.strip button { line-height: 10px; color: #555; font-size: 13px; }
.tabs { display: flex; height: 22px; background: #f0f0f0; border-bottom: 1px solid #bfc2c8; flex: none; }
.tabs button { padding: 0 8px; background: #e0e1e3; border-right: 1px solid #bfc2c8; color: #888; }
.tabs .on { background: #f3f3f3; color: #222; }
.bar { display: flex; align-items: center; height: 30px; background: #f0f0f0; border-bottom: 1px solid #bfc2c8; gap: 13px; padding: 0 4px; flex: none; }
.bar button { display: flex; align-items: center; gap: 2px; }
.bar .more::after { margin: 2px 0 0 5px; }
.bar .over { margin-left: auto; }
.bar .over svg { width: 8px; height: 6px; }
.acts button { color: #444; }
.search { display: flex; align-items: center; height: 19px; border-bottom: 1px solid #bfc2c8; padding-right: 3px; color: #2b87d0; flex: none; }
.search input { color: #333; }
.search input::placeholder { color: #888; }
.items li { margin-left: 20px; width: 24px; height: 21px; line-height: 20px; padding-left: 3px; background: #c9daf1; }
.sheet { background: linear-gradient(#f0f0f0 21px, #fff 21px); }
.grid { border-collapse: separate; border-spacing: 0; table-layout: fixed; }
.grid th, .grid td { height: 21px; padding: 0; text-align: center; font-weight: 400; line-height: 18px; border: 0 solid #d4d5d7; border-width: 0 1px 1px 0; white-space: nowrap; }
.grid th { background: #f0f0f0; color: #333; }
.grid td { background-color: #fff; }
.grid .l { text-align: left; padding-left: 4px; }
.c-on { width: 51px; } .c-color { width: 36px; } .c-name { width: 151px; }
.grid input { appearance: none; display: block; width: 14px; height: 14px; margin: 0 auto; border: 1px solid #858585; border-radius: 3px; background: #fff; }
.grid input:checked { border-color: #50a0ff; background: #50a0ff url("data:image/svg+xml,%3Csvg xmlns='http://www.w3.org/2000/svg' viewBox='0 0 12 12'%3E%3Cpath d='M3 6l2 2 4-4' fill='none' stroke='white' stroke-width='1.500'/%3E%3C/svg%3E"); }
.grid input:indeterminate { border-color: #777; background: #9cc9fb; box-shadow: inset 0 0 0 1px #fff, inset 0 0 0 2px #3f93f0; }
.grid input:disabled { background: #eee; border-color: #b0b0b0; }
.tri { width: 6px; height: 8px; margin: 0 auto; fill: none; stroke: #888; }

.split { width: 4px; flex: none; display: flex; align-items: center; }
.split i { width: 4px; height: 100px; line-height: 100px; font-size: 8px; background: #626b77; color: #ccc; overflow: hidden; }

/* drawing area and what floats over it */
.canvas { flex: 1; background: #000; position: relative; overflow: hidden; min-width: 0; }
.cad { position: absolute; left: 0; top: 0; width: 1784px; height: 1201px; }
.cad path { fill: none; stroke-width: 1; shape-rendering: crispEdges; }
.axis { stroke: #008000; } .wall { stroke: #f00000; } .faint { stroke: #780000; } .col-y { stroke: #f0f000; }
.frame { stroke: #00e600; } .dim { stroke: #00cc00; } .bar-r { stroke: #e60000; }
.cad .pen { stroke: #ff3535; stroke-width: 3; shape-rendering: auto; stroke-linejoin: round; stroke-linecap: round; }
.cad .cross { stroke: #fff; stroke-width: 2; shape-rendering: auto; }
.cad text { text-anchor: middle; dominant-baseline: central; }
.num { font: 17px "Noto Sans", sans-serif; fill: #fff; }
.tiny { font: bold 6px "Liberation Sans", sans-serif; fill: #0f0; }
.small { font: bold 6px "Liberation Sans", sans-serif; fill: #00e600; }
.ucs { font: 14px "Noto Sans", sans-serif; }

.palette { position: absolute; left: 6px; top: 6px; width: 124px; display: flex; flex-direction: column; align-items: center; gap: 6px; border: 1px solid #2565a8; background: #1f4a75; padding-bottom: 6px; color: #fff; }
.palette-head { align-self: stretch; height: 13px; background: #17395e; border-bottom: 1px solid #122f4e; text-align: right; }
.palette-head button { width: 16px; line-height: 12px; color: #9cc4ee; font-size: 14px; display: inline-block; vertical-align: top; }
.palette > button { width: 110px; height: 26px; border: 1px solid #173c63; border-radius: 2px; background: #21507f; }
.menu-btn { display: flex; align-items: center; justify-content: center; padding-left: 24px; gap: 18px; }
.menu-btn::after { content: ""; border: 4px solid transparent; border-top-color: #fff; border-bottom: 0; }

.dialog { position: absolute; left: 590px; top: 444px; width: 361px; border: 1px solid #b9cbe0; background: #f0f0f0; color: #444; }
.dialog header { display: flex; justify-content: space-between; height: 26px; line-height: 24px; background: #2c80e2; color: #fff; padding: 0 8px 0 7px; }
.dialog header button { font-size: 18px; }
.msg { display: flex; gap: 10px; padding: 18px 0 0 24px; height: 89px; font-size: 14px; }
.msg p { font-size: 14px; line-height: 26px; }
.q { width: 30px; height: 30px; margin-top: 4px; border-radius: 50%; background: #2479d4; color: #fff; font-size: 22px; font-weight: 700; line-height: 30px; text-align: center; }
.dialog footer { display: flex; justify-content: flex-end; gap: 6px; margin: 0 9px 9px; padding: 6px 2px 0 0; border-top: 1px solid #c0c2c5; }
.dialog footer button { width: 78px; height: 26px; border: 1px solid #b9c3d4; border-radius: 3px; background: #fafafa; }
.dialog footer .yes { background: #2c80e2; border-color: #2c80e2; color: #fff; }

.views { position: absolute; right: 3px; top: 3px; width: 33px; height: 228px; display: flex; flex-direction: column; align-items: center; gap: 5px; padding-top: 10px; background: #979a9f; border: 1px solid #b3b5b9; }
.views button { display: flex; flex-direction: column; align-items: center; gap: 6px; }
.views .down::after { border-top-color: #3b4656; }
.views svg { width: 24px; height: 24px; }
.views text { font: 9px "Liberation Sans", sans-serif; fill: #222c3a; }
.views hr { width: 24px; margin: 0; border: 0; border-top: 1px solid #6b7078; }

/* display settings */
.show { width: 264px; background: #f0f0f0; flex: none; border-right: 0; }
.show .strip { padding-right: 0; }
.show h2 { height: 22px; line-height: 21px; padding-left: 7px; color: #555; border-bottom: 1px solid #c0c3c9; flex: none; }
.subtabs { display: flex; gap: 2px; align-items: flex-end; height: 31px; padding-left: 2px; border-bottom: 1px solid #c0c3c9; flex: none; }
.subtabs button { width: 60px; height: 23px; background: #e0e0e0; border-radius: 3px 3px 0 0; color: #555; }
.subtabs .on { width: 62px; height: 26px; background: #fff; border: 1px solid #bcc0c8; border-bottom: 0; color: #2b7de0; margin-bottom: -1px; }
.scroll { display: flex; flex: 1; min-height: 0; margin: 1px 0 0 2px; border: 1px solid #c0c3c9; border-right: 0; background: #fff; overflow: hidden; }
.view { overflow: hidden; }
.c-tree { width: 122px; } .c-flag { width: 63px; }
.rail { flex: 1; display: flex; flex-direction: column; align-items: center; padding: 3px 0 2px 2px; }
.rail .up { border: 4px solid transparent; border-bottom-color: #222; border-top: 0; }
.rail .dn { border: 4px solid transparent; border-top-color: #222; border-bottom: 0; margin-top: auto; }
.rail b { width: 8px; height: 47%; margin-top: 2px; border-radius: 4px; background: #cdcdcd; }
.tree-grid td:first-child { text-align: left; background-repeat: no-repeat; --line: linear-gradient(#cfcfcf, #cfcfcf); }
.tree-grid .l1 td:first-child { padding-left: 12px; background-image: var(--line); background-size: 1px 100%; background-position: 8px 0; }
.tree-grid .l2 td:first-child { padding-left: 41px; background-image: var(--line), var(--line), var(--line); background-size: 1px 100%, 1px 100%, 16px 1px; background-position: 8px 0, 18px 0, 19px 9px; }
.tree-grid .l2.end td:first-child { background-size: 1px 100%, 1px 10px, 16px 1px; }
.tree-grid .l0 td:first-child { padding-left: 2px; }
.fold { width: 13px; height: 13px; border: 1px solid #777; border-radius: 2px; background: #fff; line-height: 10px; margin-right: 6px; vertical-align: 0; font-size: 11px; }
.reset { display: flex; justify-content: flex-end; align-items: center; height: 39px; padding: 0 4px 0 0; flex: none; }
.reset button { width: 89px; height: 26px; border: 1px solid #b9c3d4; border-radius: 3px; background: #f8f8f8; color: #333; }

/* status bar */
.status { display: flex; align-items: center; height: 29px; flex: none; background: #dddde0; gap: 3px; color: #222; }
.status button { display: flex; align-items: center; justify-content: center; gap: 4px; min-width: 25px; height: 24px; padding: 0 5px; background: #cfcfd2; border: 1px solid #98999c; }
.status button.more { width: 36px; }
.status .on { background: #fff; border: 2px solid #3d97f0; }
.s-pos { width: 247px; } .s-h { width: 80px; } .s-e { width: 131px; } .s-n { width: 99px; } .s-hide { width: 100px; }
.hint { margin-left: 2px; }
.fps { margin-left: auto; margin-right: 30px; }

.ime { position: absolute; right: 0; bottom: 21px; height: 28px; display: flex; align-items: center; gap: 7px; overflow: hidden; width: 68px; z-index: 1; }
.ime::before { content: ""; position: absolute; left: 14px; right: 0; top: 5px; bottom: 4px; background: #fff; border-top: 1px solid #ccc; border-bottom: 1px solid #ccc; z-index: -1; }
.ime svg { width: 27px; height: 27px; }
.ime b { font-size: 14px; color: #1f74c4; flex: none; }
.mark { position: absolute; left: 0; top: 110px; width: 130px; height: 90px; fill: none; stroke: #ff3535; stroke-width: 3; stroke-linejoin: round; stroke-linecap: round; pointer-events: none; }
```
FILE: app.js
```
// Layer tree: "name:flag", flag 1 = shown, m = partly shown; first entry of each line is the parent.
const TREE = [
  '轴线:1 轴网:1 辅助轴线:1',
  '柱:1 柱:1 构造柱:1 砌体柱:1',
  '墙:m 剪力墙:1 人防门框墙:1 砌体墙:1 砌体加筋 保温墙:1 暗梁 墙垛 幕墙:1',
  '门窗洞 门 窗 门联窗 墙洞 带形窗 带形洞 飘窗 老虎窗 过梁 壁龛',
  '梁:1 梁:1 连梁:1 圈梁:1',
  '板:m 现浇板 螺旋板 柱帽:1 板洞 板受力筋 板负筋 楼层板带',
  '空心楼盖:m 空心楼盖板 空心楼盖柱帽:1 主肋梁:1 成孔芯模 次肋梁 次肋梁下部筋 次肋梁支座筋 空挡 空心楼盖板...',
  '楼梯'
];
function row(item, level, end, locked) {
  const [name, flag] = item.split(':');
  const fold = level < 2 ? '<button class="fold" aria-label="折叠">−</button>' : '';
  const state = flag === '1' ? 'checked' : flag === 'm' ? 'data-mixed' : '';
  return `<tr class="l${level}${end ? ' end' : ''}"><td>${fold}${name}</td>` +
    `<td><input type="checkbox" ${state} aria-label="显示图元 ${name}"></td>` +
    `<td><input type="checkbox" ${locked ? 'disabled' : ''} aria-label="显示名称 ${name}"></td></tr>`;
}
let rows = row('所有构件:m', 0);
TREE.forEach((line, g) => {
  const items = line.split(' ');
  items.forEach((it, i) => { rows += row(it, i ? 2 : 1, i && i === items.length - 1, g === 0); });
});
document.getElementById('rows').innerHTML = rows;
document.querySelectorAll('[data-mixed]').forEach(b => { b.indeterminate = true; });

// Drawing. Each part of the sheet has its own local units.
const out = [];
const sheet = (ox, oy, sx, sy) => (x, y) => [Math.round((ox + x / sx) * 10) / 10, Math.round((oy + y / sy) * 10) / 10];
const west = sheet(770, 280, 2.178, 2.529);
const east = sheet(1380, 270, 1.8233, 2.489);
const detail = sheet(760, 910, 1.7422, 3);
const edge = sheet(1500, 910, 3, 3);
const page = sheet(0, 0, 1, 1);

// "x,y x,y ..." polylines, parted by "|"
function draw(at, cls, lines) {
  const d = lines.split('|').map(l => 'M' + l.trim().split(/\s+/).map(p => {
    const [x, y] = at(...p.split(',').map(Number));
    return (cls === 'pen' || cls === 'cross') ? `${x} ${y}` : `${Math.floor(x) + .5} ${Math.floor(y) + .5}`;
  }).join('L')).join('');
  out.push(`<path class="${cls}" d="${d}"/>`);
}
function label(at, cls, x, y, s, turn = 0) {
  const [px, py] = at(x, y);
  out.push(`<text class="${cls}" x="${px}" y="${py}"${turn ? ` transform="rotate(${turn} ${px} ${py})"` : ''}>${s}</text>`);
}
function bubble(at, x, y, s) {
  const [cx, cy] = at(x, y);
  const pts = [0, 1, 2, 3, 4, 5, 6, 7].map(i => {
    const a = i * Math.PI / 4;
    return `${(cx + 12 * Math.sin(a)).toFixed(1)} ${(cy - 12 * Math.cos(a)).toFixed(1)}`;
  });
  out.push(`<path class="axis" d="M${pts.join('L')}Z"/>`);
  label(page, 'num', cx, cy, s);
}
const box = (a, b, c, d) => `${a},${b} ${c},${b} ${c},${d} ${a},${d} ${a},${b}`;

// west wing
draw(west, 'faint', '372,365 383,474|372,476 313,757|664,322 724,842|743,304 806,842|836,290 898,842|919,290 982,842|258,876 1405,694|771,842 761,755 922,731 935,842');
draw(west, 'axis', '266,349 1330,181|272,407 1337,238|259,290 282,464|508,250 530,425|746,212 768,388|1054,163 1076,336|1282,128 1302,303|1322,122 1343,296|128,488 282,464|131,517 284,491|163,779 313,757 275,920|199,1088 350,1064|222,1300 375,1274|227,1317 377,1292|182,481 277,1308|231,474 327,1300');
draw(west, 'wall', '282,464 1343,296|284,491 1344,324|282,464 377,1292|530,425 626,1252|768,388 774,441|1076,336 1135,842|1302,303 1366,842|1343,296 1359,439|350,1064 670,1014|375,1274 668,1228|377,1292 685,1246');
draw(west, 'col-y', '803,845 802,837 811,837 811,845|896,845 894,820 903,820 905,845');
[[256, 260, '6-11'], [505, 221, '6-10'], [743, 183, '6-7'], [1051, 134, '6-4'], [1278, 98, '6-2'], [1318, 92, '6-1'],
 [103, 492, '6-A'], [106, 520, '6-B'], [138, 783, '6-C'], [268, 948, '6-M'], [174, 1092, '6-K'], [198, 1302, '6-L'], [202, 1322, '6-M']
].forEach(a => bubble(west, ...a));
[[394, 357, '7450'], [638, 318, '7151'], [795, 236, '31801'], [910, 277, '9200'], [1178, 232, '6800'], [1311, 214, '1200']
].forEach(a => label(west, 'num', ...a, -8));
[[206, 491, '700'], [222, 637, '6800'], [202, 900, '21350'], [254, 922, '7950'], [287, 1181, '5400'], [299, 1296, '500']
].forEach(a => label(west, 'num', ...a, 82));

// east wing
const xs = [108, 334, 560, 760, 862, 1116];
draw(east, 'faint', [305, 427, 495, 574, 642, 967].map(x => `${x},${x === 427 ? 240 : 212} ${x},1129`).join('|') + '|77,708 1175,708|467,668 603,668 603,863 694,863 694,990 378,990 378,863 467,863 467,668');
draw(east, 'axis', xs.map(x => `${x},121 ${x},295`).join('|') + '|108,180 1116,180|108,237 1116,237|1159,295 1159,1129|1201,295 1201,1129|' + [295, 315, 598, 902, 1117, 1129].map(y => `1116,${y} 1244,${y}`).join('|'));
draw(east, 'axis', xs.map(x => `${x - 4},242 ${x + 4},232|${x - 4},185 ${x + 4},175`).join('|'));
draw(east, 'wall', [108, 334, 760, 862, 1116].map(x => `${x},295 ${x},1129`).join('|') + '|560,295 560,315|108,295 1116,295|108,315 1116,315|108,1117 1116,1117|108,1129 1116,1129|760,598 1116,598|108,902 1116,902|1196,607 1175,607 1175,941 1190,941|1311,520 1285,520 1285,960 1280,960|1315,524 1297,524 1297,960 1302,960|1285,637 1297,637|1285,755 1297,755|1285,823 1297,823|1407,594 1386,594 1386,927 1399,927|1505,597 1501,592 1501,830|1505,1000 1501,996 1501,1111 1516,1111|1550,392 1529,392 1529,1111 1541,1111|' + box(376, 1487, 428, 1506) + '|' + box(415, 1435, 428, 1506) + '|' + box(512, 1487, 583, 1506));
draw(east, 'col-y', box(491, 753, 499, 777) + '|' + box(570, 753, 577, 777) + '|' + [0, 78].map(k => `${492 + k},902 ${492 + k},891 ${500 + k},891 ${500 + k},902 ${508 + k},902 ${508 + k},912 ${484 + k},912 ${484 + k},902 ${492 + k},902`).join('|') + '|763,606 780,606 780,617 772,617 772,631 763,631 763,606');
['4-13', '4-10', '4-6', '4-3', '4-2', '4-1'].forEach((s, i) => bubble(east, xs[i], 92, s));
[[293, '4-C'], [314, '4-D'], [599, '4-E'], [902, '4-F'], [1117, '4-G'], [1129, '4-H']].forEach(a => bubble(east, 1265, ...a));
[[612, 151, '35700'], [221, 209, '8000'], [447, 209, '8000'], [660, 209, '7100'], [811, 209, '3600'], [989, 209, '9000']].forEach(a => label(east, 'num', ...a));
[[1180, 303, '500'], [1180, 456, '7400'], [1180, 750, '7850'], [1222, 712, '21650'], [1180, 1009, '5600'], [1180, 1123, '300']].forEach(a => label(east, 'num', ...a, -90));

// column detail table
const cuts = [22, 211, 400, 588, 778, 966, 1155, 1344, 1532];
draw(detail, 'frame', cuts.map(x => `${x},43 ${x},601`).join('|') + '|' + [43, 415, 461, 508, 553, 601].map(y => `22,${y} 1532,${y}`).join('|'));
const specs = [
  ['KZZ1', '16C25', 'C12@100'], ['KZZ2', '16C25', 'C12@100'], ['KZZ3', '18C25', 'C12@100'], ['KZZ4', '20C25', 'C12@100'],
  ['KZZ5', '24C25+4C16', 'C12@100'], ['KZ1', '4C20+8C16', 'C8@100/200'], ['KZ2', '4C20+12C16', 'C8@100/200'], ['KZ3', '18C20', 'C8@100']
];
specs.forEach(([n, bars, ties], i) => {
  const x = (cuts[i] + cuts[i + 1]) / 2;
  label(detail, 'tiny', x, 434, n);
  label(detail, 'tiny', x, 482, '-9.250~-5.650');
  label(detail, 'tiny', x, 534, bars);
  label(detail, 'tiny', x, 576, ties);
});
function hooks(at, a, b, c, d, k) {
  draw(at, 'bar-r', `${a + k},${b + 2 * k} ${a + 3 * k},${b + k}|${c - 3 * k},${b + k} ${c - k},${b + 3 * k}|${a + k},${d - 3 * k} ${a + 3 * k},${d - k}|${c - 3 * k},${d - k} ${c - k},${d - 2 * k}`);
}
// one column: outline, reinforcement, dimensions
function column(a, b, c, d, cols, rws, side, foot, w, h, bars) {
  draw(detail, 'col-y', box(a, b, c, d));
  const lines = [box(a + 4, b + 7, c - 4, d - 7)];
  for (let i = 1; i < cols; i++) { const x = a + 4 + (c - a - 8) * i / cols; lines.push(`${x},${b + 7} ${x},${d - 7}`); }
  for (let i = 1; i < rws; i++) { const y = b + 7 + (d - b - 14) * i / rws; lines.push(`${a + 4},${y} ${c - 4},${y}`); }
  draw(detail, 'bar-r', lines.join('|'));
  hooks(detail, a + 4, b + 7, c - 4, d - 7, 5);
  const end = side < a ? a - 4 : c + 4;
  draw(detail, 'dim', `${end},${b} ${side},${b} ${side},${d} ${end},${d}`);
  label(detail, 'small', side - 7, (b + d) / 2, h, -90);
  if (foot) {
    draw(detail, 'dim', `${a},${d + 5} ${a},${foot} ${c},${foot} ${c},${d + 5}`);
    label(detail, 'small', (a + c) / 2, foot - 11, w);
  }
  if (bars) {
    label(detail, 'small', (a + c) / 2, b - 8, bars);
    label(detail, 'small', a - 6, (b + d) / 2, bars, -90);
  }
}
column(90, 199, 177, 348, 4, 4, 66, 390, '800', '800', '3C25');
column(282, 199, 358, 348, 4, 4, 258, 390, '700', '800', '3C25');
column(452, 199, 562, 348, 5, 4, 429, 390, '1000', '800', '4C25');
column(642, 199, 761, 348, 6, 4, 617, 390, '1100', '800', '5C25');
column(834, 115, 898, 413, 4, 8, 809, 0, '', '1600', '9C25');
column(1015, 203, 1079, 317, 3, 3, 1102, 353, '600', '600', '');
column(1222, 199, 1299, 329, 4, 4, 1199, 371, '700', '700', '');
column(1393, 170, 1468, 329, 4, 5, 1491, 371, '700', '850', '4C20');
out.push('<rect x="831" y="995" width="11" height="12" fill="#f00020"/>');
draw(detail, 'col-y', '872,115 872,59 898,59 898,115');
draw(detail, 'bar-r', box(875, 64, 895, 115) + '|875,90 895,90');
draw(detail, 'dim', '834,100 834,59 809,59 809,115|872,59 834,59|898,66 912,66 912,92 938,92');
label(detail, 'small', 849, 51, '350'); label(detail, 'small', 881, 51, '250');
label(detail, 'small', 931, 84, '4C16'); label(detail, 'small', 803, 92, '1000', -90);

// tie sketches
function ties(at, a, b, c, d, k) {
  const w = (c - a) / 4, h = (d - b) / 4;
  const p = [box(a, b, c, d), box(a + w * .8, b + 2, a + w * 1.8, d + 4), box(a + 2, b + h * 2.2, c + 2, b + h * 3), `${a},${b + h * 1.2} ${c + 3},${b + h * 1.2}`, `${a + w * 2.4},${b + h * .8} ${a + w * 2.4},${d + 6}`];
  if (k) p.push(box(a + w * 2.4, b + 2, a + w * 3.3, d + 4));
  draw(at, 'bar-r', p.join('|'));
}
[[100, 64, 147, 150], [292, 64, 340, 150], [477, 64, 525, 150, 1], [667, 64, 714, 150, 1], [1095, 100, 1127, 154], [1232, 64, 1280, 150], [1477, 64, 1525, 150]].forEach(t => ties(detail, ...t));
draw(detail, 'bar-r', box(919, 175, 954, 332) + '|' + box(928, 165, 938, 337) + '|942,155 942,337|' + [205, 230, 255, 278, 300, 318].map(y => `919,${y} 954,${y}`).join('|') + '|934,155 952,155 952,166 934,166');

// edge members
draw(edge, 'col-y', '692,186 692,307 740,307 740,186|684,186 714,186 718,176 718,196 722,186 747,186');
draw(edge, 'bar-r', box(697, 199, 735, 304) + '|697,232 735,232|697,268 735,268|' + box(712, 115, 728, 148) + '|' + box(721, 128, 736, 142));
draw(edge, 'dim', '744,196 776,196 776,308 744,308|692,313 692,346 740,346 740,313');
label(edge, 'small', 767, 258, '600', -90); label(edge, 'small', 712, 335, '250');
draw(edge, 'col-y', '957,304 1171,304|957,257 1040,257 1040,174|1087,174 1087,257 1171,257|1033,174 1062,174 1066,168 1068,180 1072,174 1095,174|957,250 957,272 962,278 952,280 957,284 957,310|1171,250 1171,272 1176,278 1166,280 1171,284 1171,310|985,257 985,304|1143,257 1143,304|1040,202 1087,202');
draw(edge, 'bar-r', box(988, 262, 1141, 301) + '|' + box(1045, 204, 1084, 300) + '|1045,236 1084,236|1014,262 1014,300|1104,262 1104,300');
draw(edge, 'dim', '974,202 931,202 931,304 980,304|931,257 974,257|985,310 985,343 1143,343 1143,310|1040,343 1040,310|1087,343 1087,310');
label(edge, 'small', 921, 233, '300', -90); label(edge, 'small', 921, 286, '250', -90);
label(edge, 'small', 1008, 333, '300'); label(edge, 'small', 1059, 333, '250'); label(edge, 'small', 1109, 333, '300');
draw(edge, 'col-y', '1306,187 1417,187 1417,242 1362,242 1362,298 1306,298 1306,187');
draw(edge, 'bar-r', '1310,192 1414,192 1414,238 1358,238 1358,295 1310,295 1310,192|1336,192 1336,295|1358,192 1358,238|1380,192 1380,238|1310,212 1414,212|1310,238 1358,238|1310,260 1358,260|' + box(1363, 84, 1420, 106) + '|' + box(1363, 86, 1388, 138) + '|1360,98 1412,98|1400,90 1400,116|1363,122 1388,122');
draw(edge, 'dim', '1423,187 1456,187 1456,298 1423,298|1423,242 1456,242|1306,304 1306,336 1417,336 1417,304|1362,304 1362,336');
label(edge, 'small', 1446, 219, '300', -90); label(edge, 'small', 1446, 274, '300', -90);
label(edge, 'small', 1329, 326, '300'); label(edge, 'small', 1385, 326, '300');
[[731, 'YBZ1', '6C16'], [1056, 'YBZ2', '16C16'], [1381, 'YBZ3', '16C16']].forEach(([x, n, b]) => {
  label(edge, 'tiny', x, 434, n); label(edge, 'tiny', x, 482, '-9.250~-5.650');
  label(edge, 'tiny', x, 534, b); label(edge, 'tiny', x, 576, 'C8@100');
});

// coordinate mark
out.push('<path d="M540 1317V1297" style="stroke:#0d0;stroke-width:2"/><path d="M540 1288l5 12h-10z" style="fill:#0d0"/><path d="M541 1317H556" style="stroke:#f00;stroke-width:2"/><path d="M569 1317l-12-5v10z" style="fill:#f00"/><rect x="536" y="1313" width="8" height="8" fill="#2030e0"/>');
out.push('<text class="ucs" x="539" y="1280" fill="#00dd00">Y</text><text class="ucs" x="575" y="1317" fill="#ff2020">X</text>');
draw(page, 'cross', '933,781 953,801|953,781 933,801');

// red pen marks
draw(west, 'pen', '1568,628 1500,580 1455,556 1275,465 1135,419 1108,416 1020,398 950,398 935,402 875,430 830,457 813,473 736,523 692,575 660,622 625,662 580,717 543,785 528,820 518,885 510,930 510,1030 535,1075 547,1103 570,1138 618,1195 630,1204 665,1242 732,1325 748,1333 762,1350 775,1356 830,1412 875,1448 885,1461 913,1487 966,1513 983,1516 1017,1535 1042,1540 1160,1540 1174,1533');
draw(east, 'pen', '201,642 233,663 302,725 337,770 352,780 396,855 420,912 445,962 457,997 476,1035 483,1070 497,1110 500,1150 509,1220 509,1250 515,1290 516,1360 512,1390 497,1417 468,1444 430,1467 390,1479 333,1488 -293,1488');
document.getElementById('cad').innerHTML = out.join('');
```
